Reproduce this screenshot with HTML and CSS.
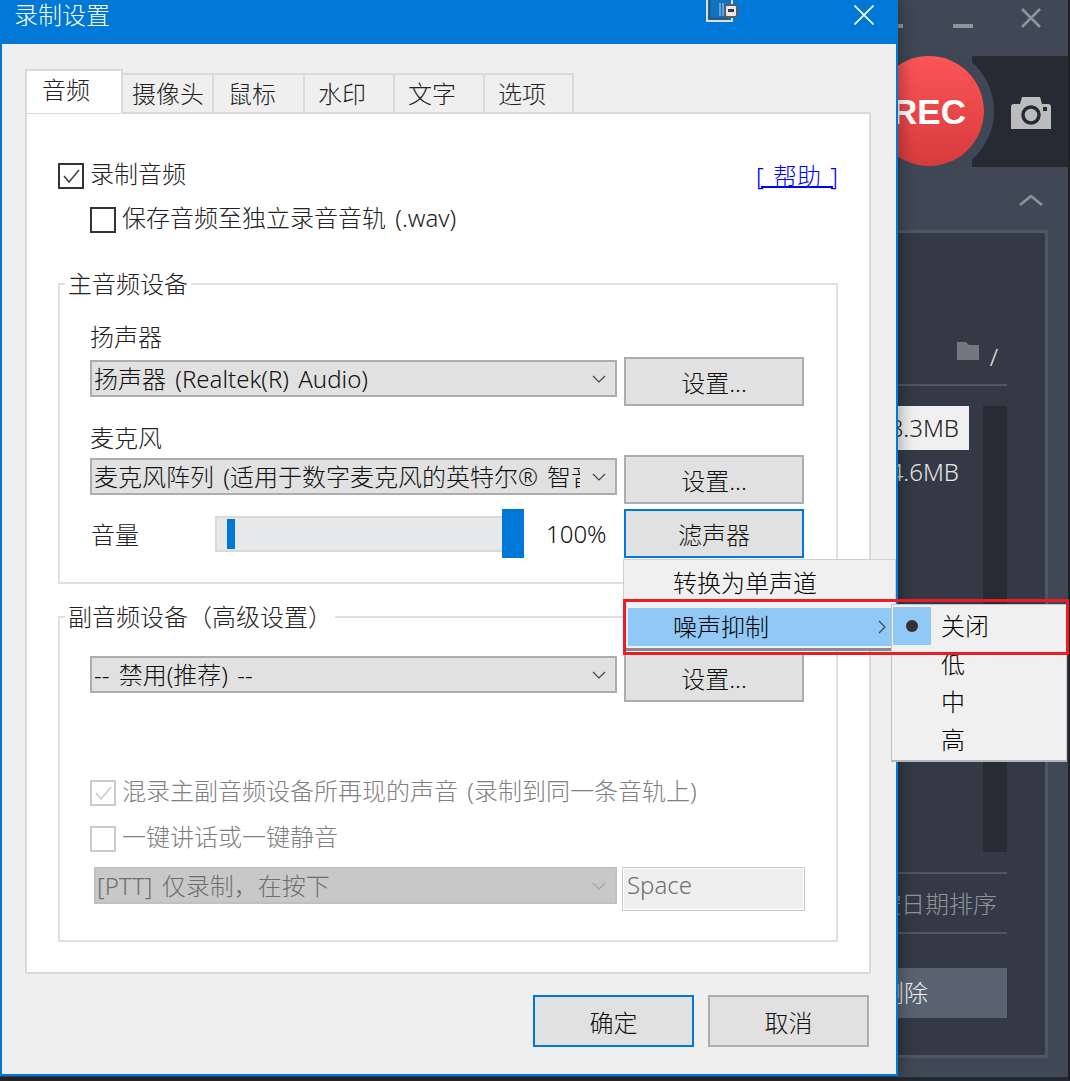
FILE: index.html
```html
<!DOCTYPE html>
<html lang="zh-CN">
<head>
    <meta charset="UTF-8">
    <title>录制设置</title>
    <link rel="stylesheet" href="styles.css">
</head>
<body>
    <div class="app">
        <div class="app-head">
            <span class="win-dash"></span>
            <span class="win-dash"></span>
            <svg class="win-close" viewBox="0 0 20 20"><path d="M1 1L19 19M19 1L1 19"/></svg>
        </div>
        <div class="rec-row">
            <div class="rec-btn">REC</div>
            <div class="cam-btn">
                <svg width="40" height="32" viewBox="0 0 40 32">
                    <path d="M0 10q0-3 3-3h6l2-7h18l2 7h6q3 0 3 3v22H0z" fill="#bcbcbc"/>
                    <circle cx="20" cy="18" r="8" fill="none" stroke="#262b33" stroke-width="3.5"/>
                    <rect x="32" y="10" width="4" height="4" fill="#262b33"/>
                </svg>
            </div>
        </div>
        <div class="collapse-row">
            <svg width="24" height="11" viewBox="0 0 24 11"><path d="M1 10L12 1L23 10" fill="none" stroke="#8f949b" stroke-width="2.5"/></svg>
        </div>
        <div class="panel">
            <div class="path-row">
                <svg width="22" height="18" viewBox="0 0 22 18"><path d="M0 0h9l3 3h10v15H0z" fill="#727780"/></svg>
                <span class="path-slash">/</span>
            </div>
            <div class="panel-line"></div>
            <div class="file-area">
                <div class="file-list">
                    <div class="file-row selected">8.3MB</div>
                    <div class="file-row">4.6MB</div>
                </div>
                <div class="file-scroll"></div>
            </div>
            <div class="panel-line sort-top"></div>
            <div class="sort-label">按日期排序</div>
            <div class="panel-line"></div>
            <div class="delete-btn">删除</div>
        </div>
    </div>

    <div class="dialog">
        <div class="titlebar">
            <span class="title">录制设置</span>
            <div class="title-icons">
                <svg class="title-app" width="32" height="23" viewBox="0 0 32 23">
                    <path d="M1 -2v23h25V-2" fill="#1272c2" stroke="#d8e0e6" stroke-width="2"/>
                    <path d="M3.5 0v18.500h20" fill="none" stroke="#3d4a5c" stroke-width="1.500"/>
                    <path d="M14 3v13M17 3v13" stroke="#7fb4de" stroke-width="1.500"/>
                    <rect x="19" y="5" width="12" height="12" rx="2" fill="#e8e8e8" stroke="#555c66" stroke-width="2"/>
                    <rect x="22" y="9" width="6" height="3" fill="#3a3f47"/>
                </svg>
                <svg class="title-close" viewBox="0 0 20 20"><path d="M0.5 0.5L19.5 19.5M19.5 0.5L0.5 19.5"/></svg>
            </div>
        </div>

        <div class="dialog-body">
            <div class="tabs">
                <div class="tab active">音频</div>
                <div class="tab cam">摄像头</div>
                <div class="tab mouse">鼠标</div>
                <div class="tab">水印</div>
                <div class="tab">文字</div>
                <div class="tab last">选项</div>
            </div>

            <div class="pane">
                <div class="top-row">
                    <div class="check-row">
                        <span class="check checked">
                            <svg viewBox="0 0 20 20"><path d="M3 10L8 16L18 4"/></svg>
                        </span>
                        <span>录制音频</span>
                    </div>
                    <a class="help" href="#">[ 帮助 ]</a>
                </div>
                <div class="check-row wav-row">
                    <span class="check"></span>
                    <span>保存音频至独立录音音轨 (.wav)</span>
                </div>

                <fieldset class="group group-main">
                    <legend>主音频设备</legend>
                    <div class="field-label first">扬声器</div>
                    <div class="device-row">
                        <div class="combo"><span class="combo-text">扬声器 (Realtek(R) Audio)</span><svg class="chev" viewBox="0 0 14 8"><path d="M1 1L7 7L13 1"/></svg></div>
                        <button class="btn">设置...</button>
                    </div>
                    <div class="field-label">麦克风</div>
                    <div class="device-row mic">
                        <div class="combo"><span class="combo-text">麦克风阵列 (适用于数字麦克风的英特尔® 智音技术)</span><svg class="chev" viewBox="0 0 14 8"><path d="M1 1L7 7L13 1"/></svg></div>
                        <button class="btn">设置...</button>
                    </div>
                    <div class="volume-row">
                        <span class="volume-label">音量</span>
                        <div class="slider">
                            <span class="slider-level"></span>
                            <span class="slider-thumb"></span>
                        </div>
                        <span class="volume-value">100%</span>
                        <button class="btn focus">滤声器</button>
                    </div>
                </fieldset>

                <fieldset class="group group-sub">
                    <legend>副音频设备（高级设置）</legend>
                    <div class="device-row">
                        <div class="combo"><span class="combo-text">-- 禁用(推荐) --</span><svg class="chev" viewBox="0 0 14 8"><path d="M1 1L7 7L13 1"/></svg></div>
                        <button class="btn">设置...</button>
                    </div>
                    <div class="check-row off mix-row">
                        <span class="check checked">
                            <svg viewBox="0 0 20 20"><path d="M3 10L8 16L18 4"/></svg>
                        </span>
                        <span>混录主副音频设备所再现的声音 (录制到同一条音轨上)</span>
                    </div>
                    <div class="check-row off ptt-row">
                        <span class="check"></span>
                        <span>一键讲话或一键静音</span>
                    </div>
                    <div class="ptt-fields">
                        <div class="combo disabled"><span class="combo-text">[PTT] 仅录制，在按下</span><svg class="chev" viewBox="0 0 14 8"><path d="M1 1L7 7L13 1"/></svg></div>
                        <div class="key-input">Space</div>
                    </div>
                </fieldset>
            </div>

            <div class="dialog-foot">
                <button class="btn foot-btn focus">确定</button>
                <button class="btn foot-btn">取消</button>
            </div>
        </div>
    </div>

    <div class="menu">
        <div class="menu-item">转换为单声道</div>
        <div class="menu-item hot">噪声抑制<svg class="menu-arrow" viewBox="0 0 8 14"><path d="M1 1L7 7L1 13"/></svg></div>
    </div>
    <div class="submenu">
        <div class="sub-item"><span class="sub-mark on"><i></i></span>关闭</div>
        <div class="sub-item"><span class="sub-mark"></span>低</div>
        <div class="sub-item"><span class="sub-mark"></span>中</div>
        <div class="sub-item"><span class="sub-mark"></span>高</div>
    </div>
    <div class="red-box"></div>
</body>
</html>
```

FILE: styles.css
```css
* {
    box-sizing: border-box;
}
html, body {
    margin: 0;
    padding: 0;
}
body {
    position: relative;
    width: 1070px;
    height: 1081px;
    overflow: hidden;
    font-family: "Noto Sans", "Noto Sans CJK SC", sans-serif;
    font-size: 24px;
    font-weight: 300;
    color: #222;
    background-color: #3f4854;
}

/* app behind the dialog */
.app {
    position: absolute;
    left: 0;
    top: 0;
    width: 1070px;
    height: 1081px;
    display: flex;
    flex-direction: column;
    background-color: #3f4854;
    border-right: 2px solid #1d2025;
    border-bottom: 4px solid #24282e;
}
.app-head {
    height: 56px;
    display: flex;
    align-items: flex-start;
    justify-content: flex-end;
    padding-right: 27px;
}
.win-dash {
    width: 20px;
    height: 4px;
    margin-top: 24px;
    margin-right: 50px;
    background-color: #8f949b;
}
.win-close {
    width: 20px;
    height: 20px;
    margin-top: 8px;
    margin-left: -2px;
    fill: none;
    stroke: #8f949b;
    stroke-width: 2.5;
}
.rec-row {
    height: 111px;
    display: flex;
    justify-content: flex-end;
}
.rec-btn {
    position: relative;
    width: 110px;
    height: 110px;
    margin-right: -12px;
    border-radius: 50%;
    background: linear-gradient(#fb5556, #d63b3c);
    box-shadow: 0 0 0 10px #3d4755;
    color: #fff;
    font-family: "Liberation Sans", sans-serif;
    font-size: 35px;
    font-weight: 700;
    line-height: 112px;
    text-align: center;
}
.cam-btn {
    width: 96px;
    display: flex;
    align-items: center;
    justify-content: center;
    padding: 2px 0 0 22px;
    background-color: #262b33;
}
.collapse-row {
    height: 63px;
    display: flex;
    justify-content: flex-end;
    padding: 28px 25px 0 0;
}
.panel {
    width: 188px;
    height: 828px;
    margin-left: 860px;
    padding: 109px 38px 0 0;
    background-color: #333a46;
    border: 3px solid #4e5762;
    color: #e6e6e6;
}
.path-row {
    height: 25px;
    display: flex;
    justify-content: flex-end;
    gap: 11px;
    padding-right: 9px;
}
.path-slash {
    line-height: 30px;
}
.panel-line {
    height: 2px;
    background-color: #4e5762;
}
.path-row + .panel-line {
    margin-top: 17px;
}
.file-area {
    height: 446px;
    margin-top: 20px;
    display: flex;
    gap: 14px;
}
.file-list {
    flex: 1;
}
.file-row {
    height: 44px;
    padding-right: 10px;
    line-height: 44px;
    text-align: right;
}
.file-row.selected {
    background-color: #f0f0f0;
    color: #222;
}
.file-scroll {
    width: 24px;
    background-color: #262c33;
}
.sort-top {
    margin-top: 20px;
}
.sort-label {
    height: 58px;
    padding-right: 10px;
    line-height: 60px;
    text-align: right;
    color: #8f949b;
}
.delete-btn {
    height: 50px;
    margin-top: 34px;
    padding-right: 79px;
    line-height: 50px;
    text-align: right;
    background-color: #596370;
    color: #f2f2f2;
}

/* dialog */
.dialog {
    position: absolute;
    left: 0;
    top: 0;
    width: 898px;
    height: 1076px;
    display: flex;
    flex-direction: column;
    background-color: #efefef;
    border: 2px solid #0078d7;
    border-top: 0;
    box-shadow: 3px 0 14px rgba(0, 0, 0, 0.3);
}
.titlebar {
    height: 44px;
    flex: none;
    display: flex;
    justify-content: space-between;
    background-color: #0078d7;
    padding-left: 12px;
    color: #fff;
}
.title {
    line-height: 30px;
}
.title-icons {
    display: flex;
    align-items: flex-start;
}
.title-app {
    margin-right: 116px;
}
.title-close {
    width: 20px;
    height: 20px;
    margin-top: 5px;
    margin-right: 22px;
    fill: none;
    stroke: #fff;
    stroke-width: 1.6;
}
.dialog-body {
    flex: 1;
    padding: 25px 25px 0 23px;
}
.tabs {
    height: 43px;
    display: flex;
    align-items: flex-end;
    position: relative;
    z-index: 1;
}
.tab {
    width: 90px;
    height: 39px;
    border: 2px solid #dadada;
    border-left: 0;
    border-bottom: 0;
    padding-left: 13px;
    line-height: 38px;
}
.tab.active {
    width: 98px;
    height: 44px;
    margin-bottom: -1px;
    padding-left: 15px;
    border-left: 2px solid #dadada;
    background-color: #fff;
}
.tab.cam {
    width: 91px;
    padding-left: 9px;
}
.tab.mouse {
    width: 91px;
    padding-left: 14px;
}
.tab.last {
    width: 89px;
}
.pane {
    height: 862px;
    padding: 49px 31px 0 31px;
    background-color: #fff;
    border: 2px solid #dadada;
}
.top-row {
    display: flex;
    justify-content: space-between;
    align-items: flex-start;
}
.check-row {
    display: flex;
    align-items: center;
    gap: 6px;
    height: 25px;
    line-height: 22px;
    word-spacing: 3px;
    white-space: nowrap;
}
.check-row > span:last-child {
    margin-top: -3px;
}
.check {
    width: 26px;
    height: 26px;
    flex: none;
    border: 2px solid #333;
    display: flex;
    align-items: center;
    justify-content: center;
}
.check svg {
    width: 20px;
    height: 20px;
    fill: none;
    stroke: #444;
    stroke-width: 1.6;
}
.help {
    color: #0000ff;
    line-height: 25px;
    word-spacing: 3px;
    text-decoration: underline;
    text-decoration-thickness: 2px;
}
.wav-row {
    margin-top: 19px;
    margin-left: 32px;
}

.group {
    margin: 0;
    min-width: 0;
    border: 2px solid #e0e0e0;
    padding: 0 32px 0 30px;
}
.group legend {
    margin-left: -25px;
    padding: 0 3px;
    height: 28px;
    line-height: 28px;
}
.group-main {
    height: 314px;
    margin-top: 38px;
}
.group-sub {
    height: 339px;
    margin-top: 19px;
}
.field-label {
    height: 34px;
    margin-top: 15px;
    line-height: 34px;
}
.field-label.first {
    height: 37px;
    margin-top: 22px;
}
.device-row {
    display: flex;
    justify-content: space-between;
    align-items: flex-start;
}
.group-sub .device-row {
    margin-top: 22px;
}
.combo {
    width: 527px;
    height: 37px;
    flex: none;
    margin-top: 3px;
    display: flex;
    align-items: center;
    justify-content: space-between;
    padding: 0 9px 0 2px;
    background-color: #e1e1e1;
    border: 2px solid #adadad;
    color: #111;
}
.combo-text {
    width: 486px;
    overflow: hidden;
    white-space: nowrap;
    line-height: 33px;
    word-spacing: 3px;
}
.chev {
    width: 14px;
    height: 8px;
    flex: none;
    fill: none;
    stroke: #444;
    stroke-width: 1.2;
}
.btn {
    width: 180px;
    height: 49px;
    flex: none;
    padding: 0;
    font: inherit;
    color: #111;
    background-color: #e1e1e1;
    border: 2px solid #adadad;
}
.btn.focus {
    border-color: #0078d7;
}
.volume-row {
    height: 49px;
    margin-top: 5px;
    display: flex;
    align-items: center;
}
.volume-label {
    width: 125px;
    padding-left: 1px;
}
.slider {
    position: relative;
    width: 309px;
    height: 36px;
    background-color: #e6e8e9;
    border: 2px solid #d9d9d9;
}
.slider-level {
    position: absolute;
    left: 10px;
    top: 1px;
    width: 8px;
    height: 30px;
    background-color: #0078d7;
}
.slider-thumb {
    position: absolute;
    right: -2px;
    top: -9px;
    width: 22px;
    height: 49px;
    background-color: #0078d7;
}
.volume-value {
    width: 100px;
    padding-left: 22px;
    color: #111;
}
.mix-row {
    margin-top: 78px;
}
.ptt-row {
    margin-top: 21px;
}
.check-row.off {
    color: #808080;
}
.check-row.off .check {
    border-color: #ccc;
}
.check-row.off .check svg {
    stroke: #ccc;
}
.ptt-fields {
    display: flex;
    align-items: flex-start;
    margin-top: 16px;
    padding-left: 4px;
}
.combo.disabled {
    width: 523px;
    margin-top: 0;
    background-color: #c8c8c8;
    border-color: #c0c0c0;
    color: #6f6f6f;
    padding-left: 1px;
}
.combo.disabled .chev {
    stroke: #a5a5a5;
}
.key-input {
    width: 183px;
    height: 44px;
    flex: none;
    margin-left: 5px;
    padding-left: 4px;
    line-height: 34px;
    background-color: #efefef;
    border: 1px solid #c8c8c8;
    box-shadow: inset 0 0 0 1px #fff;
    color: #6f6f6f;
}
.dialog-foot {
    display: flex;
    justify-content: flex-end;
    gap: 14px;
    margin-top: 21px;
    margin-right: 2px;
}
.foot-btn {
    width: 161px;
    height: 52px;
}

/* popup menus */
.menu {
    position: absolute;
    left: 623px;
    top: 559px;
    width: 273px;
    height: 92px;
    padding: 1px 1px 0 4px;
    background-color: #f0f0f0;
    border: 1px solid #cfcfcf;
    border-bottom: 3px solid #8a8a8a;
    color: #000;
}
.menu-item {
    position: relative;
    height: 47px;
    padding-left: 45px;
    line-height: 44px;
}
.menu-item.hot {
    height: 38px;
    line-height: 38px;
    background-color: #90c8f6;
}
.menu-arrow {
    position: absolute;
    right: 8px;
    top: 12px;
    width: 8px;
    height: 14px;
    fill: none;
    stroke: #444;
    stroke-width: 1.2;
}
.submenu {
    position: absolute;
    left: 891px;
    top: 604px;
    width: 176px;
    height: 158px;
    padding: 2px 1px;
    background-color: #f0f0f0;
    border: 1px solid #c4c4c4;
    border-bottom: 2px solid #b5b5b5;
    color: #000;
}
.sub-item {
    height: 38px;
    display: flex;
    align-items: center;
    gap: 10px;
    line-height: 36px;
}
.sub-mark {
    width: 38px;
    height: 38px;
    display: flex;
    align-items: center;
    justify-content: center;
}
.sub-mark.on {
    background-color: #90c8f6;
}
.sub-mark i {
    width: 12px;
    height: 12px;
    border-radius: 50%;
    background-color: #333;
}
.red-box {
    position: absolute;
    left: 623px;
    top: 599px;
    width: 446px;
    height: 56px;
    border: 3px solid #ed1c24;
}
```
